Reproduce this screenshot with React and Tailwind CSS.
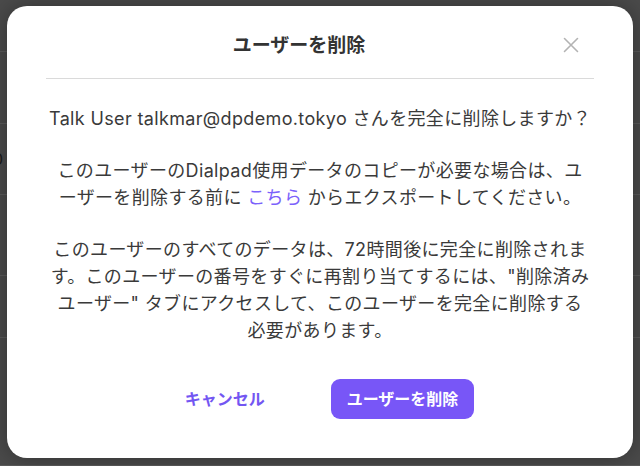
import React from "react";

const ROWS = [52, 72, 71, 81, 62, 128];

const FONT = {
  fontFamily: '"Inter", "Noto Sans CJK JP", sans-serif',
};

function CloseIcon() {
  return (
    <svg width="16" height="16" viewBox="0 0 16 16" fill="none">
      <path
        d="M1.5 1.5L14.5 14.5M14.5 1.5L1.5 14.5"
        stroke="#b3b3b3"
        strokeWidth="1.6"
        strokeLinecap="round"
      />
    </svg>
  );
}

export default function App() {
  return (
    <div
      className="relative w-[640px] h-[466px] overflow-hidden bg-[#4b4b4b]"
      style={FONT}
    >
      {/* page behind the overlay */}
      <div className="flex flex-col">
        {ROWS.map((h, i) => (
          <div
            key={i}
            className="border-b border-[#5c5c5c] text-[16px] text-[#1a1a1a] flex items-center"
            style={{ height: h }}
          >
            {i === 2 && <span className="-ml-[7px]">0</span>}
          </div>
        ))}
      </div>

      {/* modal */}
      <div className="absolute left-[7px] top-[6px] w-[626px] h-[452px] bg-white rounded-[20px] shadow-[0_0_24px_rgba(0,0,0,0.35)] px-[39px] flex flex-col">
        <div className="relative flex items-center justify-center pt-[26px] pb-[19px] pr-[42px] border-b border-[#dadada]">
          <h2 className="text-[19px] leading-[27px] font-bold text-[#333]">
            ユーザーを削除
          </h2>
          <button className="absolute right-[15px] top-[31px] p-0">
            <CloseIcon />
          </button>
        </div>

        <div className="flex flex-col items-center text-center text-[18px] leading-[27px] tracking-[0.35px] text-[#3a3a3a] pt-[26px] gap-[25px]">
          <p className="whitespace-nowrap">
            Talk User talkmar@dpdemo.tokyo さんを完全に削除しますか？
          </p>
          <p className="whitespace-nowrap">
            このユーザーのDialpad使用データのコピーが必要な場合は、ユ
            <br />
            ーザーを削除する前に{" "}
            <a className="text-[#7b62fb] cursor-pointer">こちら</a>{" "}
            からエクスポートしてください。
          </p>
          <p className="whitespace-nowrap">
            このユーザーのすべてのデータは、72時間後に完全に削除されま
            <br />
            す。このユーザーの番号をすぐに再割り当てするには、"削除済み
            <br />
            ユーザー" タブにアクセスして、このユーザーを完全に削除する
            <br />
            必要があります。
          </p>
        </div>

        <div className="flex items-center justify-center gap-[66px] mt-[35px] pl-[19px]">
          <button className="text-[16px] font-bold text-[#7356f2]">
            キャンセル
          </button>
          <button className="h-[40px] px-[16px] rounded-[9px] bg-[#7856f7] text-white text-[16px] font-bold">
            ユーザーを削除
          </button>
        </div>
      </div>
    </div>
  );
}
